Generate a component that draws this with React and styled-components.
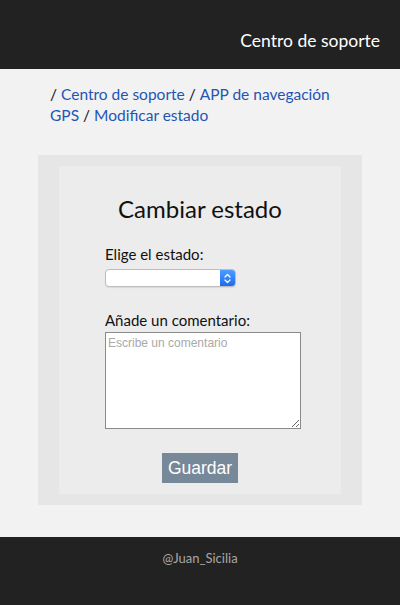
import React from 'react';
import styled, { createGlobalStyle } from 'styled-components';

const font = `Lato, "Noto Sans", sans-serif`;

const Global = createGlobalStyle`
  html, body { margin: 0; padding: 0; background: #f2f2f2; }
  body { font-family: ${font}; color: #111; }
  * { box-sizing: border-box; }
`;

const Page = styled.div`
  display: flex;
  flex-direction: column;
  width: 400px;
`;

const Header = styled.header`
  height: 69px;
  background: #222222;
  display: flex;
  justify-content: flex-end;
  align-items: flex-start;
  padding: 30px 20px 0 0;
`;

const Brand = styled.h1`
  margin: 0;
  font-size: 17.5px;
  line-height: 22px;
  font-weight: 400;
  color: #ffffff;
`;

const Breadcrumb = styled.nav`
  margin: 15px 50px 0 50px;
  font-size: 15.5px;
  line-height: 21px;
  color: #111;
`;

const Sep = styled.span`
  margin: 0 4px 0 ${p => (p.$first ? 0 : 4)}px;
`;

const Crumb = styled.a`
  color: #1f55b3;
  text-decoration: none;
`;

const Outer = styled.section`
  margin: 29px 38px 0 38px;
  background: #e6e6e6;
  padding: 11px 21px;
`;

const Inner = styled.div`
  background: #ececec;
  padding: 29px 40px 11px 46px;
  display: flex;
  flex-direction: column;
`;

const Title = styled.h2`
  margin: 0 0 0 -6px;
  font-size: 24px;
  line-height: 28px;
  font-weight: 400;
  text-align: center;
`;

const Label = styled.label`
  display: block;
  font-size: 15px;
  line-height: 20px;
  margin-top: ${p => p.$top}px;
`;

const SelectBox = styled.div`
  margin-top: 5px;
  width: 131px;
  height: 18px;
  display: flex;
  border: 1px solid #bdbdbd;
  border-radius: 4px;
  background: #fff;
  overflow: hidden;
  box-shadow: 0 1px 1px rgba(0,0,0,0.08);
`;

const NativeSelect = styled.select`
  flex: 1;
  appearance: none;
  border: none;
  background: transparent;
  outline: none;
  font-size: 12px;
  padding: 0 4px;
`;

const Stepper = styled.span`
  width: 15px;
  display: flex;
  align-items: center;
  justify-content: center;
  background: linear-gradient(#4d9cff, #1a6cf0);
`;

const TextArea = styled.textarea`
  margin-top: 2px;
  width: 196px;
  height: 97px;
  border: 1px solid #8a8a8a;
  background: #fff;
  font-family: "Liberation Sans", Arial, sans-serif;
  font-size: 12px;
  padding: 3px 2px;
  &::placeholder { color: #a9a9a9; }
`;

const Button = styled.button`
  align-self: center;
  margin: 24px 0 0 -6px;
  width: 76px;
  height: 30px;
  border: none;
  background: #778899;
  color: #fff;
  font-family: "Liberation Sans", Arial, sans-serif;
  font-size: 17.5px;
  padding: 0;
`;

const Footer = styled.footer`
  margin-top: 32px;
  height: 68px;
  background: #222222;
  display: flex;
  justify-content: center;
  padding-top: 13px;
  font-size: 13px;
  line-height: 16px;
  color: #a8a8a8;
`;

const crumbs = ['Centro de soporte', 'APP de navegación GPS', 'Modificar estado'];

export default function App() {
  return (
    <Page>
      <Global />
      <Header>
        <Brand>Centro de soporte</Brand>
      </Header>
      <Breadcrumb>
        {crumbs.map((c, i) => (
          <React.Fragment key={c}>
            <Sep $first={i === 0}>/</Sep>
            <Crumb href="#">{c}</Crumb>
          </React.Fragment>
        ))}
      </Breadcrumb>
      <Outer>
        <Inner>
          <Title>Cambiar estado</Title>
          <Label $top={21}>Elige el estado:</Label>
          <SelectBox>
            <NativeSelect defaultValue="">
              <option value=""></option>
            </NativeSelect>
            <Stepper>
              <svg width="7" height="11" viewBox="0 0 7 11" fill="none" stroke="#fff" strokeWidth="1.3" strokeLinecap="round" strokeLinejoin="round">
                <path d="M1 4 L3.5 1.5 L6 4" />
                <path d="M1 7 L3.5 9.5 L6 7" />
              </svg>
            </Stepper>
          </SelectBox>
          <Label $top={23}>Añade un comentario:</Label>
          <TextArea placeholder="Escribe un comentario" />
          <Button>Guardar</Button>
        </Inner>
      </Outer>
      <Footer>@Juan_Sicilia</Footer>
    </Page>
  );
}
